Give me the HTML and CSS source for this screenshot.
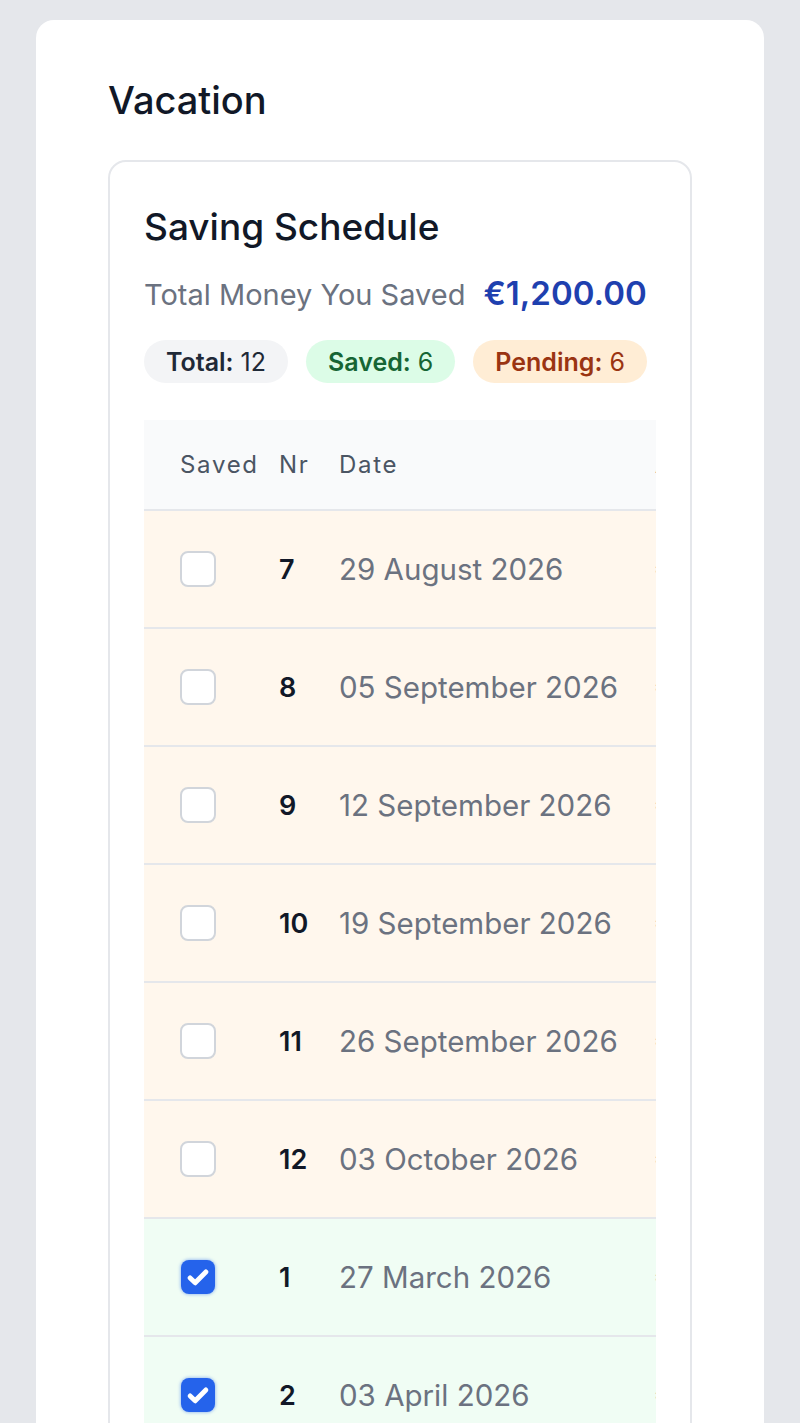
FILE: index.html
```html
<!DOCTYPE html>
<html lang="en">
<head>
<meta charset="utf-8">
<title>Vacation</title>
<link rel="stylesheet" href="styles.css">
</head>
<body>
<main class="page">
  <section class="card">
    <h1 class="title">Vacation</h1>
    <div class="schedule">
      <h2 class="schedule-title">Saving Schedule</h2>
      <div class="total-row">
        <span class="total-label">Total Money You Saved</span>
        <span class="total-value">€1,200.00</span>
      </div>
      <div class="badges">
        <span class="badge badge-total"><b>Total:</b> 12</span>
        <span class="badge badge-saved"><b>Saved:</b> 6</span>
        <span class="badge badge-pending"><b>Pending:</b> 6</span>
      </div>
      <div class="table-wrap">
        <table class="table">
          <colgroup>
            <col class="c-saved"><col class="c-nr"><col class="c-date"><col class="c-amount">
          </colgroup>
          <thead>
            <tr><th>Saved</th><th>Nr</th><th>Date</th><th>Amount</th></tr>
          </thead>
          <tbody>
            <tr class="pending"><td><span class="cb"></span></td><td class="nr">7</td><td class="date">29 August 2026</td><td class="amt">€100.00</td></tr>
            <tr class="pending"><td><span class="cb"></span></td><td class="nr">8</td><td class="date">05 September 2026</td><td class="amt">€100.00</td></tr>
            <tr class="pending"><td><span class="cb"></span></td><td class="nr">9</td><td class="date">12 September 2026</td><td class="amt">€100.00</td></tr>
            <tr class="pending"><td><span class="cb"></span></td><td class="nr">10</td><td class="date">19 September 2026</td><td class="amt">€100.00</td></tr>
            <tr class="pending"><td><span class="cb"></span></td><td class="nr">11</td><td class="date">26 September 2026</td><td class="amt">€100.00</td></tr>
            <tr class="pending"><td><span class="cb"></span></td><td class="nr">12</td><td class="date">03 October 2026</td><td class="amt">€100.00</td></tr>
            <tr class="saved"><td><span class="cb cb-on"><svg viewBox="0 0 16 16"><path d="M3.8 8.5l2.7 2.6L12.2 5.3"/></svg></span></td><td class="nr">1</td><td class="date">27 March 2026</td><td class="amt">€100.00</td></tr>
            <tr class="saved"><td><span class="cb cb-on"><svg viewBox="0 0 16 16"><path d="M3.8 8.5l2.7 2.6L12.2 5.3"/></svg></span></td><td class="nr">2</td><td class="date">03 April 2026</td><td class="amt">€100.00</td></tr>
            <tr class="saved"><td><span class="cb cb-on"><svg viewBox="0 0 16 16"><path d="M3.8 8.5l2.7 2.6L12.2 5.3"/></svg></span></td><td class="nr">3</td><td class="date">10 April 2026</td><td class="amt">€100.00</td></tr>
            <tr class="saved"><td><span class="cb cb-on"><svg viewBox="0 0 16 16"><path d="M3.8 8.5l2.7 2.6L12.2 5.3"/></svg></span></td><td class="nr">4</td><td class="date">17 April 2026</td><td class="amt">€100.00</td></tr>
          </tbody>
        </table>
      </div>
    </div>
  </section>
</main>
</body>
</html>
```
FILE: styles.css
```css
* { box-sizing: border-box; }
html, body { margin: 0; padding: 0; }
body {
  background: #e5e7eb;
  font-family: Inter, "Noto Sans", sans-serif;
  color: #111827;
}
.page { padding: 20px 36px 0; }
.card {
  background: #ffffff;
  border-radius: 18px;
  padding: 57px 72px 40px;
}
.title {
  margin: 0 0 37px;
  font-size: 38px;
  line-height: 46px;
  font-weight: 500;
  color: #111827;
}
.schedule {
  border: 2px solid #e5e7eb;
  border-radius: 18px;
  padding: 42px 34px 36px;
}
.schedule-title {
  margin: 0;
  font-size: 37px;
  line-height: 46px;
  font-weight: 500;
  color: #111827;
}
.total-row {
  display: flex;
  align-items: baseline;
  gap: 18px;
  margin-top: 24px;
}
.total-label { font-size: 29px; line-height: 38px; color: #6b7280; }
.total-value { font-size: 33px; line-height: 38px; font-weight: 600; color: #1e40af; }
.badges {
  display: flex;
  gap: 18px;
  margin-top: 26px;
}
.badge {
  display: inline-flex;
  align-items: center;
  height: 43px;
  padding: 0 22px;
  border-radius: 22px;
  font-size: 25px;
}
.badge b { font-weight: 600; margin-right: 7px; }
.badge-total { background: #f3f4f6; color: #1f2937; }
.badge-saved { background: #dcfce7; color: #166534; }
.badge-pending { background: #ffedd5; color: #9a3412; }
.table-wrap {
  margin-top: 37px;
  overflow: hidden;
}
.table {
  border-collapse: collapse;
  table-layout: fixed;
  width: 780px;
}
.c-saved { width: 120px; }
.c-nr { width: 60px; }
.c-date { width: 316px; }
.c-amount { width: 284px; }
.table th {
  height: 90px;
  background: #f9fafb;
  border-bottom: 2px solid #e5e7eb;
  text-align: left;
  font-size: 24px;
  font-weight: 400;
  letter-spacing: 1.7px;
  color: #4b5563;
  padding: 0 15px;
}
.table th:first-child, .table td:first-child { padding-left: 36px; }
.table td {
  height: 118px;
  border-bottom: 2px solid #e5e7eb;
  padding: 0 15px;
  vertical-align: middle;
}
.pending td { background: #fff7ed; }
.saved td { background: #f0fdf4; }
.nr { font-size: 27px; font-weight: 600; color: #111827; }
.date { font-size: 29.5px; color: #6b7280; white-space: nowrap; }
.amt { font-size: 29.5px; color: #6b7280; white-space: nowrap; }
.cb {
  display: block;
  width: 36px;
  height: 36px;
  border: 2px solid #d1d5db;
  border-radius: 8px;
  background: #ffffff;
}
.cb-on {
  width: 34px;
  height: 34px;
  margin-left: 1px;
  border: none;
  background: #2563eb;
  box-shadow: 0 0 3px 1px rgba(37, 99, 235, 0.35);
  display: flex;
  align-items: center;
  justify-content: center;
}
.cb-on svg { width: 30px; height: 30px; }
.cb-on path { fill: none; stroke: #ffffff; stroke-width: 2.6; stroke-linecap: round; stroke-linejoin: round; }
```
